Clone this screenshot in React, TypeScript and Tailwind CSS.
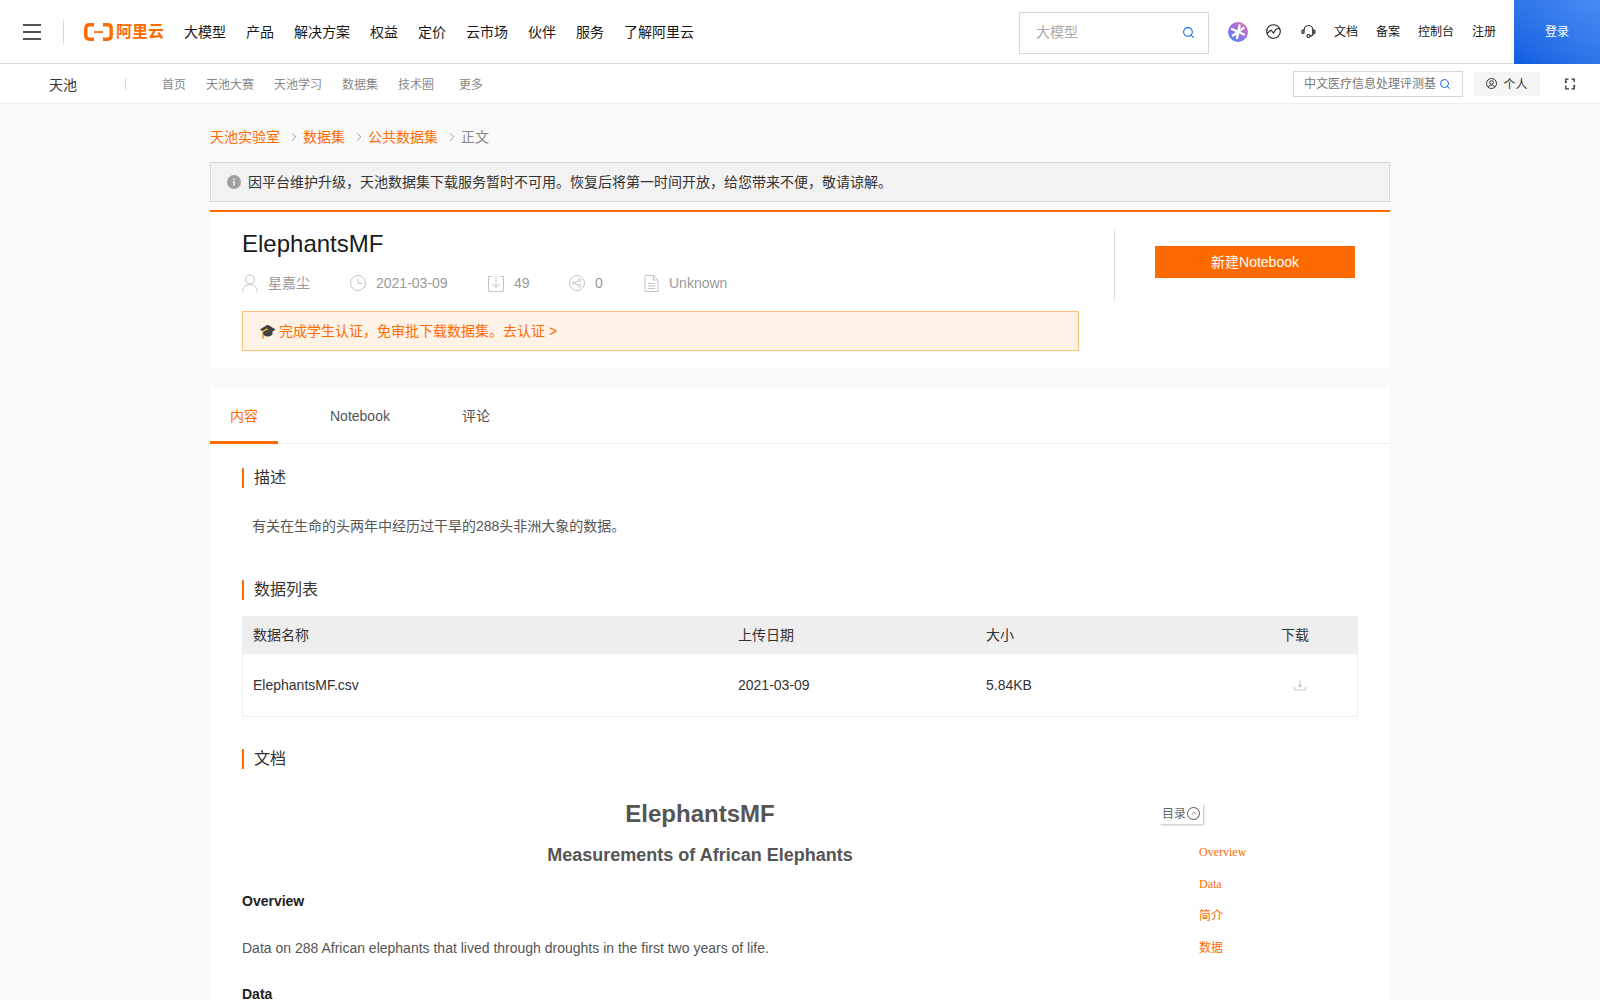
import { ChevronRight, Search, ChevronUp } from "lucide-react";

const FONT = { fontFamily: '"Liberation Sans", "Noto Sans CJK SC", sans-serif' };

const mainNav = ["大模型", "产品", "解决方案", "权益", "定价", "云市场", "伙伴", "服务", "了解阿里云"];
const subNav = ["首页", "天池大赛", "天池学习", "数据集", "技术圈"];
const tocItems = ["Overview", "Data", "简介", "数据"];

const SectionTitle = ({ children }: { children: React.ReactNode }) => (
  <div className="border-l-2 border-[#ff6a00] pl-[10px] text-[16px] leading-[20px] text-[#333]">{children}</div>
);

const Logo = () => (
  <div className="flex items-center gap-[3px] ml-[20px]">
    <svg width="29" height="18" viewBox="0 0 29 18" fill="none">
      <path d="M10 1.8H5.5C3 1.8 1.8 3 1.8 5.5v7c0 2.5 1.2 3.7 3.7 3.7H10" stroke="#ff6a00" strokeWidth="3.4" />
      <path d="M19 1.8h4.5c2.5 0 3.7 1.2 3.7 3.7v7c0 2.500-1.200 3.700-3.700 3.700H19" stroke="#ff6a00" strokeWidth="3.4" />
      <rect x="10" y="8.200" width="9" height="1.700" fill="#ff6a00" />
    </svg>
    <span className="text-[16px] leading-[20px] font-bold text-[#ff6a00]">阿里云</span>
  </div>
);

const Header = () => (
  <div className="h-[64px] flex items-center bg-white border-b border-[#d8d8d8]">
    <div className="flex flex-col gap-[5px] ml-[23px] w-[18px]">
      <div className="h-[2px] bg-[#555]" />
      <div className="h-[2px] bg-[#555]" />
      <div className="h-[2px] bg-[#555]" />
    </div>
    <div className="h-[24px] w-px bg-[#d8d8d8] ml-[22px]" />
    <Logo />
    <div className="flex gap-[20px] ml-[20px] text-[14px] leading-[22px] pt-[1px] text-[#181818]">
      {mainNav.map((n) => (
        <span key={n}>{n}</span>
      ))}
    </div>
    <div className="ml-auto mt-[2px] h-[42px] w-[190px] border border-[#d8d8d8] flex items-center justify-between pl-[16px] pr-[13px] text-[14px] text-[#aaa]">
      <span>大模型</span>
      <Search className="w-[13px] h-[13px] text-[#1366ec]" />
    </div>
    <svg className="ml-[19px]" width="20" height="20" viewBox="0 0 20 20">
      <defs>
        <linearGradient id="spark" x1="0.9" y1="0" x2="0.1" y2="1">
          <stop offset="0" stopColor="#e0709a" />
          <stop offset="0.5" stopColor="#9a6fe6" />
          <stop offset="1" stopColor="#4a8cf5" />
        </linearGradient>
      </defs>
      <circle cx="10" cy="10" r="10" fill="url(#spark)" />
      <path d="M11.500 3.500L9 16M4 7l12 5.500M15.500 6L5 13.500" stroke="#fff" strokeWidth="2.400" strokeLinecap="round" />
    </svg>
    <svg className="ml-[18px]" width="15" height="15" viewBox="0 0 15 15" fill="none" stroke="#222" strokeWidth="1.100">
      <circle cx="7.500" cy="7.500" r="6.800" />
      <path d="M1 9.500L5 6l2.500 3 2.500-4 4-.5" />
    </svg>
    <svg className="ml-[20px]" width="15" height="15" viewBox="0 0 15 15" fill="none" stroke="#222" strokeWidth="1.200">
      <path d="M3 6.500C3 3.500 5 1.500 7.500 1.500S12 3.500 12 6.500V9.500" />
      <rect x="1" y="6" width="2" height="3.500" rx="1" />
      <rect x="12" y="6" width="2" height="3.500" rx="1" />
      <circle cx="7.500" cy="12" r="1.500" />
      <path d="M9 12c2 0 3-1 3-2.500" />
    </svg>
    <div className="flex gap-[18px] ml-[18px] text-[12px] text-[#181818]">
      <span>文档</span>
      <span>备案</span>
      <span>控制台</span>
      <span>注册</span>
    </div>
    <div className="ml-[18px] w-[86px] h-[64px] bg-gradient-to-tr from-[#0f5fe0] to-[#4a8cf2] flex items-center justify-center text-[12px] text-white">
      登录
    </div>
  </div>
);

const SubHeader = () => (
  <div className="h-[40px] flex items-center bg-white border-b border-[#eee]">
    <span className="ml-[49px] text-[14px] leading-[22px] pt-[2px] text-[#333]">天池</span>
    <div className="h-[12px] w-px bg-[#d8d8d8] ml-[48px]" />
    <div className="flex items-center ml-[36px] gap-[20px] text-[12px] leading-[20px] pt-[3px] text-[#888]">
      {subNav.map((n) => (
        <span key={n}>{n}</span>
      ))}
      <span className="ml-[5px]">更多</span>
    </div>
    <div className="ml-auto h-[26px] w-[170px] border border-[#d8d8d8] flex items-center justify-between pl-[10px] pr-[11px] text-[12px] leading-[20px] text-[#777]">
      <span className="whitespace-nowrap pt-[1px]">中文医疗信息处理评测基</span>
      <Search className="w-[12px] h-[12px] text-[#1366ec] shrink-0" />
    </div>
    <div className="ml-[11px] h-[24px] w-[66px] bg-[#f5f5f5] flex items-center justify-center gap-[6px] text-[12px] leading-[20px] text-[#333]">
      <svg width="11" height="11" viewBox="0 0 11 11" fill="none" stroke="#333">
        <circle cx="5.500" cy="5.500" r="5" />
        <circle cx="5.500" cy="4.500" r="1.800" />
        <path d="M2.500 9c.5-1.500 1.500-2 3-2s2.500.5 3 2" />
      </svg>
      <span className="pt-[2px]">个人</span>
    </div>
    <svg className="ml-[24px] mr-[24px]" width="12" height="12" viewBox="0 0 12 12" fill="none" stroke="#333" strokeWidth="1.300">
      <path d="M4.500 1.200H1.800V4.500M7.500 1.200h2.700V4M1.800 7.500v3.300H5M10.200 8v2.800H7.500" />
      <path d="M.3 3.500h3L1.800 5.500zM8.700 8.500h3L10.200 6.500z" fill="#333" stroke="none" />
    </svg>
  </div>
);

const Meta = ({ icon, text, w }: { icon: React.ReactNode; text: string; w: string }) => (
  <div className={`flex items-center gap-[10px] ${w}`}>
    {icon}
    <span>{text}</span>
  </div>
);

const metaIcons = {
  user: (
    <svg width="16" height="18" viewBox="0 0 16 18" fill="none" stroke="#c4c4c4">
      <circle cx="8" cy="5.500" r="4.500" />
      <path d="M.7 17.500c0-4 3-7 7.300-7s7.300 3 7.300 7" />
    </svg>
  ),
  clock: (
    <svg width="16" height="16" viewBox="0 0 16 16" fill="none" stroke="#c4c4c4">
      <circle cx="8" cy="8" r="7.500" />
      <path d="M8 3.500V8.500H12" />
    </svg>
  ),
  download: (
    <svg width="16" height="17" viewBox="0 0 16 17" fill="none" stroke="#c4c4c4">
      <path d="M4.500 1.500H.5v15h15v-15h-4M8 1v11.500M4.500 9L8 12.500 11.500 9" />
    </svg>
  ),
  share: (
    <svg width="16" height="16" viewBox="0 0 16 16" fill="none" stroke="#c4c4c4">
      <circle cx="8" cy="8" r="7.500" />
      <circle cx="5" cy="8" r="1.300" />
      <circle cx="10.500" cy="5.200" r="1.300" />
      <circle cx="10.500" cy="10.800" r="1.300" />
      <path d="M6.200 7.400l3.200-1.700M6.200 8.600l3.200 1.700" />
    </svg>
  ),
  file: (
    <svg width="15" height="17" viewBox="0 0 15 17" fill="none" stroke="#c4c4c4">
      <path d="M1 .5h8.500L14 5v11.500H1zM9.500.5V5H14M4 8.500h7M4 11h7M4 13.500h7" />
    </svg>
  ),
};

const Summary = () => (
  <div className="bg-white border-t-2 border-[#ff6a00] h-[158px] flex mt-[8px] pl-[32px]">
    <div className="w-[837px]">
      <div className="mt-[16px] text-[24px] leading-[32px] text-[#1a1a1a]">ElephantsMF</div>
      <div className="flex mt-[11px] h-[24px] text-[14px] text-[#999]">
        <Meta w="w-[108px]" text="星嘉尘" icon={metaIcons.user} />
        <Meta w="w-[138px]" text="2021-03-09" icon={metaIcons.clock} />
        <Meta w="w-[81px]" text="49" icon={metaIcons.download} />
        <Meta w="w-[75px]" text="0" icon={metaIcons.share} />
        <Meta w="w-[100px]" text="Unknown" icon={metaIcons.file} />
      </div>
      <div className="mt-[16px] h-[40px] border border-[#ffc078] bg-[#fff3e8] flex items-center pl-[16px] text-[14px] text-[#ff6a00]">
        <span className="text-[#333] mr-[3px]">🎓</span>
        完成学生认证，免审批下载数据集。去认证 &gt;
      </div>
    </div>
    <div className="ml-[35px] mt-[17px] h-[72px] w-px bg-[#ddd]" />
    <div className="ml-[40px] mt-[34px] w-[200px] h-[32px] bg-[#ff6a00] flex items-center justify-center text-[14px] text-white">
      新建Notebook
    </div>
  </div>
);

const Tabs = () => (
  <div className="h-[56px] flex border-b border-[#eee] text-[14px] text-[#555]">
    <div className="w-[68px] h-[56px] pt-[4px] flex items-center justify-center border-b-[3px] border-[#ff6a00] text-[#ff6a00]">内容</div>
    <div className="ml-[52px] pt-[1px] flex items-center">Notebook</div>
    <div className="ml-[72px] pt-[1px] flex items-center">评论</div>
  </div>
);

const DataTable = () => (
  <div className="mt-[16px] border border-[#eee] text-[14px] text-[#333]">
    <div className="h-[37px] bg-[#eee] flex items-center pl-[10px]">
      <span className="w-[485px]">数据名称</span>
      <span className="w-[248px]">上传日期</span>
      <span className="w-[295px]">大小</span>
      <span>下载</span>
    </div>
    <div className="h-[62px] flex items-center pl-[10px]">
      <span className="w-[485px]">ElephantsMF.csv</span>
      <span className="w-[248px]">2021-03-09</span>
      <span className="w-[308px]">5.84KB</span>
      <svg width="12" height="12" viewBox="0 0 12 12" fill="none" stroke="#ccc" strokeWidth="1.200">
        <path d="M6 1v7M4 6l2 2 2-2M.6 8v3h10.800V8" />
      </svg>
    </div>
  </div>
);

const Doc = () => (
  <div className="flex mt-[29px]">
    <div className="w-[916px] text-[14px] text-[#555]">
      <div className="text-center text-[24px] leading-[32px] font-bold">ElephantsMF</div>
      <div className="text-center text-[18px] leading-[26px] font-bold mt-[12px]">Measurements of African Elephants</div>
      <div className="font-bold text-[#222] mt-[23px] leading-[20px]">Overview</div>
      <div className="mt-[27px] leading-[20px]">Data on 288 African elephants that lived through droughts in the first two years of life.</div>
      <div className="font-bold text-[#222] mt-[26px] leading-[20px]">Data</div>
    </div>
    <div className="ml-[2px] text-[12px]">
      <div className="mt-[6px] w-[43px] h-[20px] bg-white shadow-[1px_1px_2px_rgba(0,0,0,0.25)] flex items-center pl-[2px] gap-[1px] text-[#666]">
        目录
        <div className="w-[13px] h-[13px] -mt-[2px] rounded-full border border-[#555] flex items-center justify-center">
          <ChevronUp className="w-[8px] h-[8px]" />
        </div>
      </div>
      <div className="ml-[39px] mt-[19px] flex flex-col gap-[14px] text-[#ff6a00] leading-[18px]" style={{ fontFamily: '"Liberation Serif", "Noto Sans CJK SC", serif' }}>
        {tocItems.map((t) => (
          <div key={t}>{t}</div>
        ))}
      </div>
    </div>
  </div>
);

const Crumb = () => <ChevronRight className="w-[14px] h-[14px] text-[#888] ml-[7px] mr-[2px]" strokeWidth={1.300} />;

export default function App() {
  return (
    <div className="h-[1000px] overflow-hidden bg-[#f9f9f9]" style={FONT}>
      <Header />
      <SubHeader />
      <div className="w-[1180px] mx-auto">
        <div className="flex items-center h-[20px] mt-[23px] text-[14px] text-[#ff6a00]">
          <span>天池实验室</span>
          <Crumb />
          <span>数据集</span>
          <Crumb />
          <span>公共数据集</span>
          <Crumb />
          <span className="text-[#888]">正文</span>
        </div>
        <div className="mt-[15px] h-[40px] border border-[#d8d8d8] bg-[#f2f2f2] flex items-center pl-[16px] text-[14px] text-[#333] gap-[7px]">
          <svg width="14" height="14" viewBox="0 0 14 14">
            <circle cx="7" cy="7" r="7" fill="#a0a0a0" />
            <rect x="6.200" y="6" width="1.600" height="4.500" fill="#f2f2f2" />
            <rect x="6.200" y="3.400" width="1.600" height="1.600" fill="#f2f2f2" />
          </svg>
          因平台维护升级，天池数据集下载服务暂时不可用。恢复后将第一时间开放，给您带来不便，敬请谅解。
        </div>
        <Summary />
        <div className="bg-white mt-[20px] h-[700px]">
          <Tabs />
          <div className="px-[32px]">
            <div className="mt-[24px]">
              <SectionTitle>描述</SectionTitle>
            </div>
            <div className="mt-[28px] pl-[10px] text-[14px] leading-[20px] text-[#555]">有关在生命的头两年中经历过干旱的288头非洲大象的数据。</div>
            <div className="mt-[44px]">
              <SectionTitle>数据列表</SectionTitle>
            </div>
            <DataTable />
            <div className="mt-[32px]">
              <SectionTitle>文档</SectionTitle>
            </div>
            <Doc />
          </div>
        </div>
      </div>
    </div>
  );
}
